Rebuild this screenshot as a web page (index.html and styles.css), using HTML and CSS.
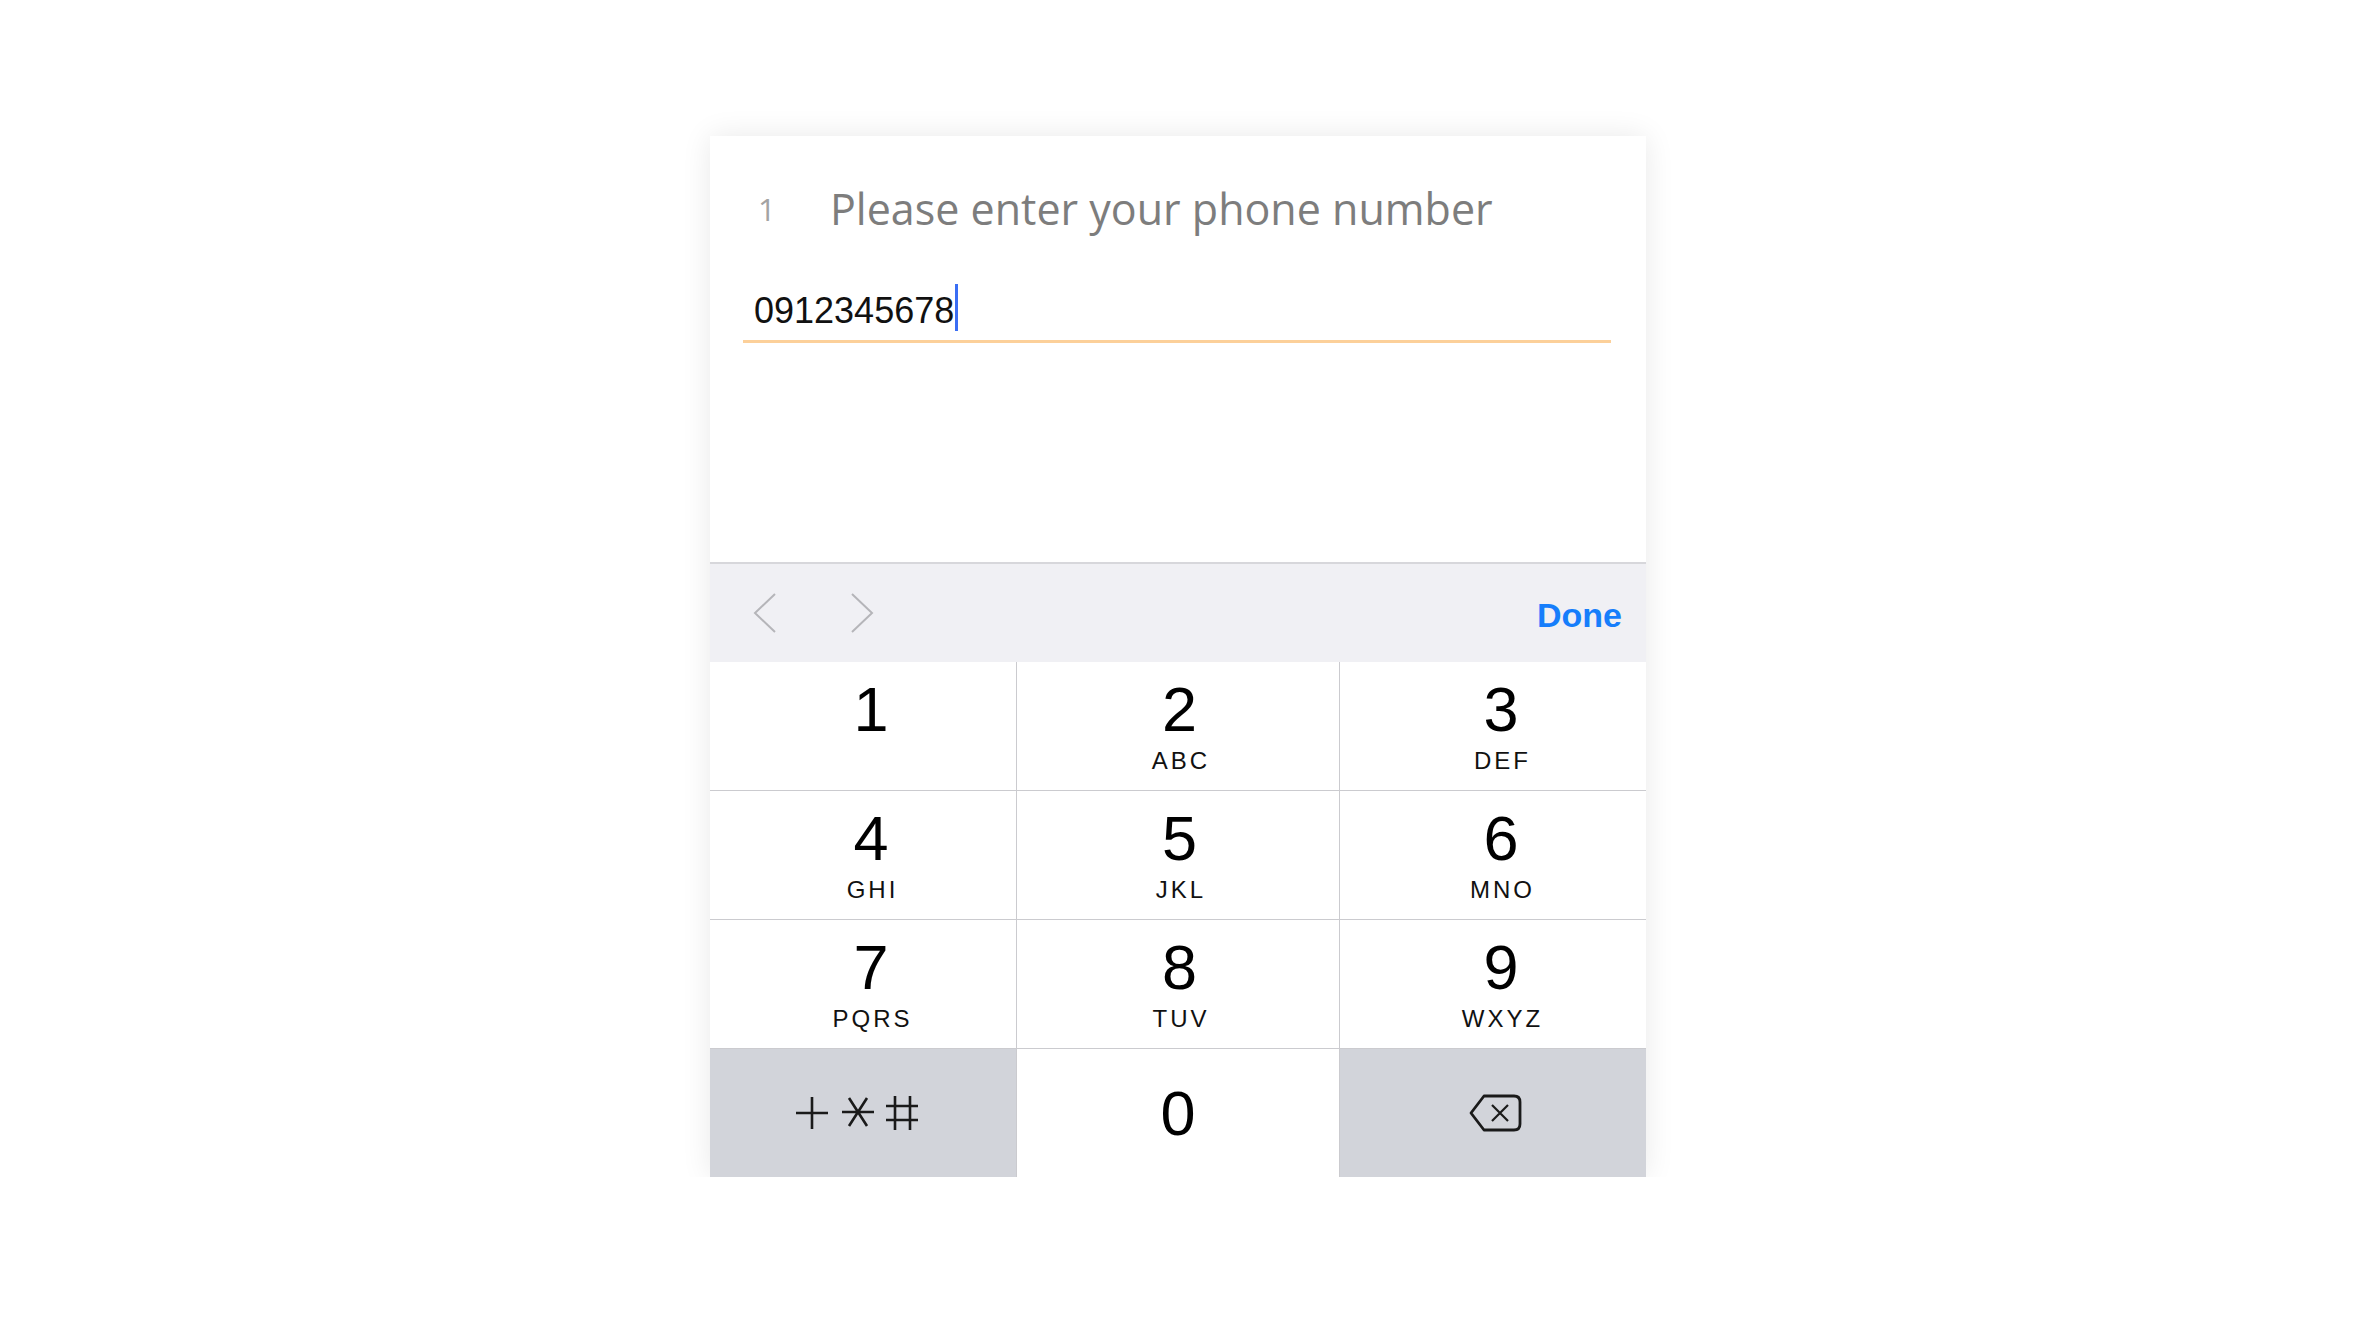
FILE: index.html
```html
<!DOCTYPE html>
<html lang="en">
<head>
	<meta charset="UTF-8">
	<title>Phone number</title>
	<link rel="stylesheet" href="styles.css">
</head>
<body>
	<div class="card">
		<div class="form">
			<div class="titleRow">
				<span class="step">1</span><span class="title">Please enter your phone number</span>
			</div>
			<div class="field">
				<span class="value">0912345678</span><span class="cursor"></span>
			</div>
		</div>
		<div class="toolbar">
			<div class="arrows">
				<svg class="arrow" width="24" height="40" viewBox="0 0 24 40"><polyline points="22,1 2,20 22,39"/></svg>
				<svg class="arrow" width="24" height="40" viewBox="0 0 24 40"><polyline points="2,1 22,20 2,39"/></svg>
			</div>
			<div class="done">Done</div>
		</div>
		<div class="keys">
			<div class="key side"><span class="num">1</span><span class="letters">&nbsp;</span></div>
			<div class="key mid"><span class="num">2</span><span class="letters">ABC</span></div>
			<div class="key side"><span class="num">3</span><span class="letters">DEF</span></div>
			<div class="key side"><span class="num">4</span><span class="letters">GHI</span></div>
			<div class="key mid"><span class="num">5</span><span class="letters">JKL</span></div>
			<div class="key side"><span class="num">6</span><span class="letters">MNO</span></div>
			<div class="key side"><span class="num">7</span><span class="letters">PQRS</span></div>
			<div class="key mid"><span class="num">8</span><span class="letters">TUV</span></div>
			<div class="key side"><span class="num">9</span><span class="letters">WXYZ</span></div>
			<div class="key key-gray key-center">
				<svg class="symbols" width="124" height="34" viewBox="0 0 124 34">
					<path d="M0 17 H32 M16 1 V33"/>
					<path d="M46 16 H78 M53 2 L71 30 M71 2 L53 30"/>
					<path d="M90 10 H122 M90 24 H122 M99 0 V34 M114 0 V34"/>
				</svg>
			</div>
			<div class="key key-center"><span class="num">0</span></div>
			<div class="key key-gray key-center">
				<svg class="backspace" width="54" height="40" viewBox="0 0 54 40">
					<path d="M2 20 L15 3 H45 Q51 3 51 9 V31 Q51 37 45 37 H15 Z"/>
					<path class="x" d="M23 12 L39 28 M39 12 L23 28"/>
				</svg>
			</div>
		</div>
	</div>
</body>
</html>
```

FILE: styles.css
```css
* {
	padding: 0px;
	margin: 0px;
	box-sizing: border-box;
}
body {
	background: #fff;
	font-family: "Liberation Sans", Arial, sans-serif;
	color: #111;
}
.card {
	width: 936px;
	margin: 136px auto 0;
	background: #fff;
	box-shadow: 0 0 28px rgba(0, 0, 0, 0.09);
}
.form {
	height: 426px;
	padding-top: 47px;
}
.titleRow {
	height: 52px;
	line-height: 52px;
	white-space: nowrap;
}
.step {
	display: inline-block;
	width: 120px;
	padding-left: 48px;
	vertical-align: 4px;
	font-family: "Open Sans", sans-serif;
	font-size: 31px;
	color: #a3a3a3;
}
.title {
	font-family: "Open Sans", sans-serif;
	font-size: 43px;
	color: #7d7d7d;
}
.field {
	margin: 49px 35px 0 33px;
	padding: 0 0 12px 11px;
	border-bottom: 3px solid #fcd09a;
	font-size: 36px;
	line-height: 44px;
	height: 59px;
}
.value {
	color: #111;
}
.cursor {
	display: inline-block;
	width: 3px;
	height: 47px;
	margin-left: 1px;
	vertical-align: -8px;
	background: #3a6ef4;
}
.toolbar {
	height: 100px;
	display: flex;
	align-items: center;
	justify-content: space-between;
	padding: 0 24px 0 43px;
	background: #f0f0f4;
	border-top: 2px solid #d7d7db;
}
.arrows {
	display: flex;
	gap: 73px;
}
.arrow polyline {
	fill: none;
	stroke: #b5b5b9;
	stroke-width: 2;
}
.done {
	font-size: 34px;
	font-weight: bold;
	color: #167efb;
	padding-top: 4px;
}
.keys {
	display: grid;
	grid-template-columns: 306px 322px 306px;
	grid-template-rows: repeat(4, 128px);
	gap: 1px;
	background: #cbcbcf;
}
.key {
	background: #fff;
	display: flex;
	flex-direction: column;
	align-items: center;
	padding-top: 16px;
}
.key.side {
	padding-left: 16px;
}
.key.mid {
	padding-left: 3px;
}
.key-gray {
	background: #d2d4da;
}
.key-center {
	justify-content: center;
	padding-top: 0;
}
.num {
	font-size: 63px;
	line-height: 63px;
	color: #000;
}
.letters {
	margin-top: 8px;
	font-size: 24px;
	line-height: 24px;
	letter-spacing: 3px;
	padding-left: 3px;
	color: #111;
}
.symbols {
	margin-right: 10px;
}
.symbols path {
	fill: none;
	stroke: #1a1a1a;
	stroke-width: 2.6;
}
.backspace {
	margin-left: 6px;
}
.backspace path {
	fill: none;
	stroke: #1a1a1a;
	stroke-width: 2.8;
	stroke-linejoin: round;
}
.backspace .x {
	stroke-width: 2.2;
}
```
